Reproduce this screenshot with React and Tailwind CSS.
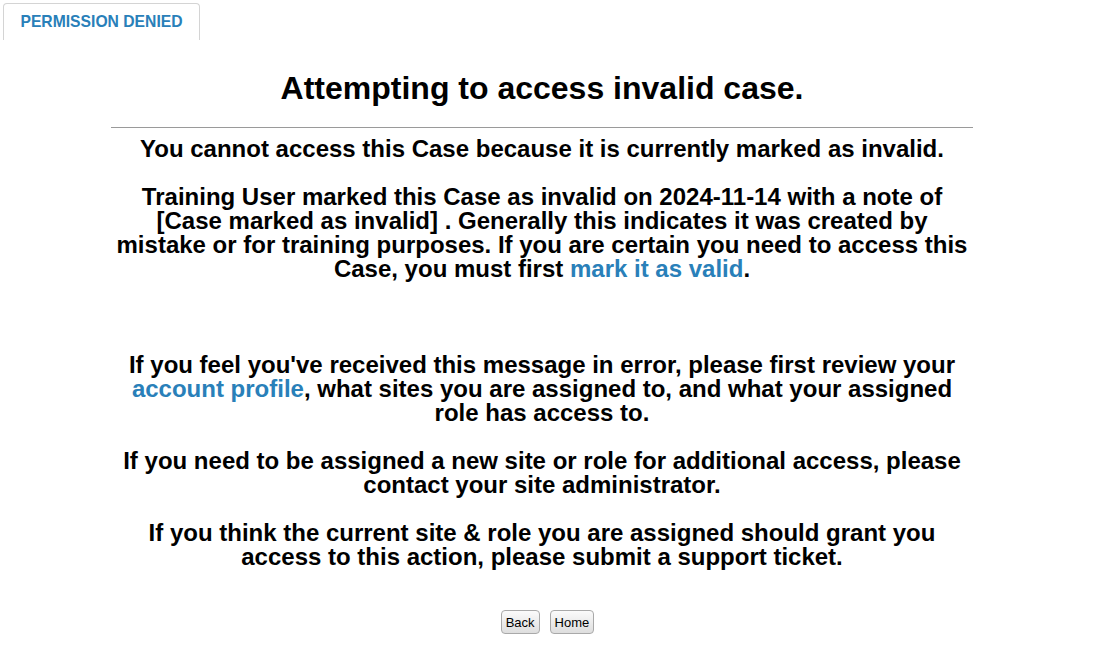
import React from 'react';

const link = 'text-[#2980b9] hover:underline';

function Btn({ children }) {
  return (
    <button className="h-[24px] px-[4px] rounded-[4px] border border-[#a9a9a9] bg-gradient-to-b from-[#fbfbfb] to-[#dedede] text-[13px] leading-none text-black">
      {children}
    </button>
  );
}

export default function App() {
  return (
    <div className="min-h-screen bg-white text-black font-['Liberation_Sans',Arial,sans-serif]">
      <div className="pl-[3px] pt-[3px]">
        <div className="w-[197px] h-[37px] border border-b-0 border-[#d4d4d4] rounded-t-[4px] flex items-center justify-center">
          <span className="text-[#2980b9] font-bold text-[15.7px]">PERMISSION DENIED</span>
        </div>
      </div>

      <div className="ml-[111px] w-[862px] text-center font-bold">
        <h1 className="text-[32px] leading-[36px] mt-[30px] mb-[21px]">Attempting to access invalid case.</h1>
        <hr className="border-0 border-t border-[#9a9a9a]" />
        <div className="text-[24px] leading-[24px] mt-[9px]">
          <p>You cannot access this Case because it is currently marked as invalid.</p>
          <p className="mt-[24px]">
            Training User marked this Case as invalid on 2024-11-14 with a note of [Case marked as invalid] . Generally this
            indicates it was created by mistake or for training purposes. If you are certain you need to access this Case,
            you must first <a href="#" className={link}>mark it as valid</a>.
          </p>
          <p className="mt-[72px]">
            If you feel you've received this message in error, please first review your{' '}
            <a href="#" className={link}>account profile</a>, what sites you are assigned to, and what your assigned role
            has access to.
          </p>
          <p className="mt-[24px]">
            If you need to be assigned a new site or role for additional access, please contact your site administrator.
          </p>
          <p className="mt-[24px]">
            If you think the current site &amp; role you are assigned should grant you access to this action, please submit a
            support ticket.
          </p>
        </div>
        <div className="mt-[41px] pl-[11px] flex justify-center gap-[10px] font-normal">
          <Btn>Back</Btn>
          <Btn>Home</Btn>
        </div>
      </div>
    </div>
  );
}
